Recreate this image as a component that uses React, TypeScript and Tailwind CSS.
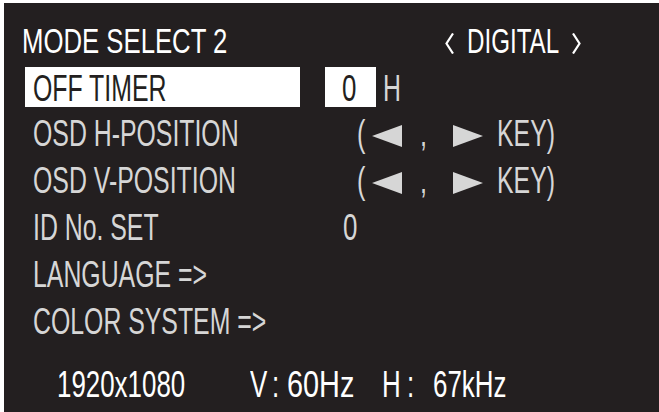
import React from "react";

const font = { fontFamily: '"Liberation Sans", Arial, sans-serif' };

function Left() {
  return (
    <svg width="30" height="22" viewBox="0 0 30 22" className="block">
      <polygon points="0,11 30,0 30,22" fill="#d6d6d6" />
    </svg>
  );
}
function Right() {
  return (
    <svg width="30" height="22" viewBox="0 0 30 22" className="block">
      <polygon points="30,11 0,0 0,22" fill="#d6d6d6" />
    </svg>
  );
}

function KeyHint() {
  return (
    <div className="flex items-center pl-[29px] text-[36px] leading-none text-[#d6d6d6]">
      <div className="w-[15px]"><span className="inline-block origin-left scale-x-[0.7]">(</span></div>
      <div className="w-[48px] pt-[4px]"><Left /></div>
      <div className="w-[33px]"><span className="inline-block origin-left scale-x-[0.7]">,</span></div>
      <div className="w-[44px] pt-[4px]"><Right /></div>
      <div><span className="inline-block origin-left scale-x-[0.69] whitespace-nowrap">KEY)</span></div>
    </div>
  );
}

function Row({ label, children }: { label: string; children?: React.ReactNode }) {
  return (
    <div className="flex h-[47px] items-center">
      <div className="w-[324px] pl-[29px] text-[36px] leading-none text-[#d6d6d6]">
        <span className="inline-block origin-left scale-x-[0.69] whitespace-nowrap">{label}</span>
      </div>
      <div className="flex-1">{children}</div>
    </div>
  );
}

export default function App() {
  return (
    <div className="w-[659px] h-[412px] bg-white pl-[4px] pt-[3px]" style={font}>
      <div className="h-full w-full bg-[#231f20] pt-[14px]">
        <div className="flex h-[46px] items-center">
          <div className="w-[441px] pl-[18px] text-[35px] leading-none text-white">
            <span className="inline-block origin-left scale-x-[0.735] whitespace-nowrap">MODE SELECT 2</span>
          </div>
          <svg width="9" height="21" viewBox="0 0 9 21" className="mt-[6px] block">
            <polyline points="8,0.5 1.5,10.5 8,20.5" fill="none" stroke="white" strokeWidth="2.2" />
          </svg>
          <div className="ml-[13px] w-[105px] text-[35px] leading-none text-white">
            <span className="inline-block origin-left scale-x-[0.69] whitespace-nowrap">DIGITAL</span>
          </div>
          <svg width="9" height="21" viewBox="0 0 9 21" className="mt-[6px] block">
            <polyline points="1,0.5 7.5,10.5 1,20.5" fill="none" stroke="white" strokeWidth="2.2" />
          </svg>
        </div>
        <div className="flex h-[47px] items-center">
          <div className="ml-[21px] flex h-[40px] w-[275px] items-center bg-white pl-[8px] pt-[4px] text-[36px] leading-none text-[#231f20]">
            <span className="inline-block origin-left scale-x-[0.69] whitespace-nowrap">OFF TIMER</span>
          </div>
          <div className="ml-[25px] flex h-[40px] w-[51px] items-center bg-white pl-[17px] pt-[4px] text-[36px] leading-none text-[#231f20]">
            <span className="inline-block origin-left scale-x-[0.72]">0</span>
          </div>
          <div className="ml-[7px] pt-[4px] text-[36px] leading-none text-[#d6d6d6]">
            <span className="inline-block origin-left scale-x-[0.69]">H</span>
          </div>
        </div>
        <Row label="OSD H-POSITION">
          <KeyHint />
        </Row>
        <Row label="OSD V-POSITION">
          <KeyHint />
        </Row>
        <Row label="ID No. SET">
          <div className="pl-[15px] text-[36px] leading-none text-[#d6d6d6]">
            <span className="inline-block origin-left scale-x-[0.72]">0</span>
          </div>
        </Row>
        <Row label="LANGUAGE =>" />
        <Row label="COLOR SYSTEM =>" />
        <div className="mt-[16px] flex h-[46px] items-center text-[37px] leading-none text-white">
          <div className="w-[246px] pl-[53px]"><span className="inline-block origin-left scale-x-[0.7] whitespace-nowrap">1920x1080</span></div>
          <div className="w-[22px]"><span className="inline-block origin-left scale-x-[0.7]">V</span></div>
          <div className="w-[15px]"><span className="inline-block origin-left scale-x-[0.7]">:</span></div>
          <div className="w-[95px]"><span className="inline-block origin-left scale-x-[0.78] whitespace-nowrap">60Hz</span></div>
          <div className="w-[25px]"><span className="inline-block origin-left scale-x-[0.7]">H</span></div>
          <div className="w-[26px]"><span className="inline-block origin-left scale-x-[0.7]">:</span></div>
          <div><span className="inline-block origin-left scale-x-[0.7] whitespace-nowrap">67kHz</span></div>
        </div>
      </div>
    </div>
  );
}
